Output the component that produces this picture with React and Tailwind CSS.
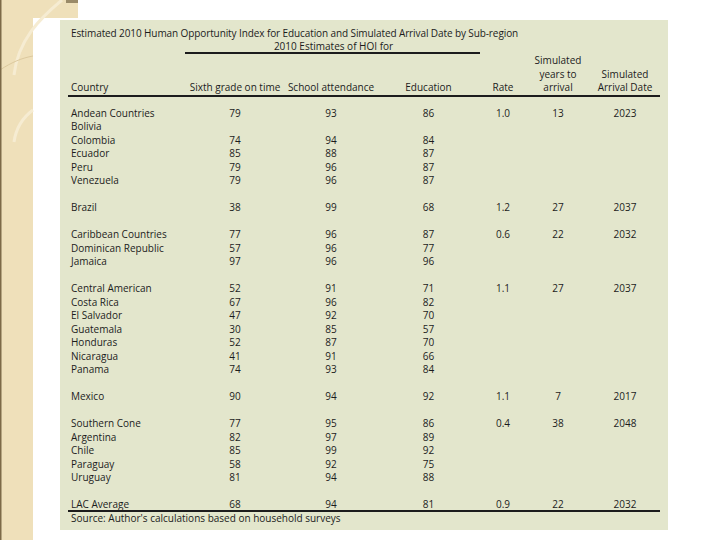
import React from "react";

const rows = [
  ["Andean Countries", "79", "93", "86", "1.0", "13", "2023"],
  ["Bolivia"],
  ["Colombia", "74", "94", "84"],
  ["Ecuador", "85", "88", "87"],
  ["Peru", "79", "96", "87"],
  ["Venezuela", "79", "96", "87"],
  null,
  ["Brazil", "38", "99", "68", "1.2", "27", "2037"],
  null,
  ["Caribbean Countries", "77", "96", "87", "0.6", "22", "2032"],
  ["Dominican Republic", "57", "96", "77"],
  ["Jamaica", "97", "96", "96"],
  null,
  ["Central American", "52", "91", "71", "1.1", "27", "2037"],
  ["Costa Rica", "67", "96", "82"],
  ["El Salvador", "47", "92", "70"],
  ["Guatemala", "30", "85", "57"],
  ["Honduras", "52", "87", "70"],
  ["Nicaragua", "41", "91", "66"],
  ["Panama", "74", "93", "84"],
  null,
  ["Mexico", "90", "94", "92", "1.1", "7", "2017"],
  null,
  ["Southern Cone", "77", "95", "86", "0.4", "38", "2048"],
  ["Argentina", "82", "97", "89"],
  ["Chile", "85", "99", "92"],
  ["Paraguay", "58", "92", "75"],
  ["Uruguay", "81", "94", "88"],
  null,
  ["LAC Average", "68", "94", "81", "0.9", "22", "2032"],
];

const grid = "grid grid-cols-[117px_100px_92px_103px_46px_64px_70px]";

function Row({ r }) {
  if (!r) return <div className="h-[13.5px]" />;
  return (
    <div className={`${grid} h-[13.5px] leading-[13.5px]`}>
      <div className="pl-[3px] whitespace-nowrap">{r[0]}</div>
      <div className="text-center">{r[1] || ""}</div>
      <div className="text-center">{r[2] || ""}</div>
      <div className="text-center">{r[3] || ""}</div>
      <div className="text-center">{r[4] || ""}</div>
      <div className="text-center">{r[5] || ""}</div>
      <div className="text-center">{r[6] || ""}</div>
    </div>
  );
}

function Decoration() {
  return (
    <svg
      className="absolute left-0 top-0"
      width="80"
      height="540"
      viewBox="0 0 80 540"
    >
      <path d="M0 0 H78 V18 H33 V540 H0 Z" fill="#efe0ba" />
      <path
        d="M62 0 C40 18 18 40 14 75"
        fill="none"
        stroke="#f6ecd2"
        strokeWidth="3"
      />
      <path
        d="M33 110 C22 118 16 128 14 142"
        fill="none"
        stroke="#f6ecd2"
        strokeWidth="3"
      />
      <path
        d="M0 70 C12 62 22 58 33 56"
        fill="none"
        stroke="#dcc99e"
        strokeWidth="1"
      />
      <path d="M66 0 H78 V3 H66 Z" fill="#9a8a68" />
      <rect x="0" y="0" width="1.5" height="540" fill="#7d6a48" />
    </svg>
  );
}

export default function App() {
  return (
    <div
      className="relative flex w-[720px] h-[540px] bg-white text-[#1c1c1c] text-[10px] overflow-hidden"
      style={{ fontFamily: '"Open Sans", "Noto Sans", sans-serif' }}
    >
      <Decoration />
      <div className="relative ml-[60px] mt-[20px] w-[608px] h-[510px] bg-[#e3e6cc] pt-[6px] pl-[8px]">
        <div className="pl-[3px] leading-[14px] whitespace-nowrap tracking-[-0.1px]">
          Estimated 2010 Human Opportunity Index for Education and Simulated Arrival Date by Sub-region
        </div>
        <div className="leading-[12px] pl-[117px] w-[414px] text-center">
          2010 Estimates of HOI for
        </div>
        <div className="ml-[117px] w-[295px] h-[2px] bg-[#1c1c1c]" />
        <div className={`${grid} leading-[13.5px] items-end`}>
          <div className="pl-[3px]">Country</div>
          <div className="text-center whitespace-nowrap">Sixth grade on time</div>
          <div className="text-center whitespace-nowrap">School attendance</div>
          <div className="text-center">Education</div>
          <div className="text-center">Rate</div>
          <div className="text-center">
            Simulated
            <br />
            years to
            <br />
            arrival
          </div>
          <div className="text-center">
            Simulated
            <br />
            Arrival Date
          </div>
        </div>
        <div className="w-[592px] h-[2px] bg-[#1c1c1c]" />
        <div className="h-[10px]" />
        {rows.map((r, i) => (
          <Row key={i} r={r} />
        ))}
        <div className="w-[592px] h-[2px] bg-[#1c1c1c] -mt-[2px]" />
        <div className="pl-[3px] leading-[13.5px]">
          Source: Author's calculations based on household surveys
        </div>
      </div>
    </div>
  );
}
